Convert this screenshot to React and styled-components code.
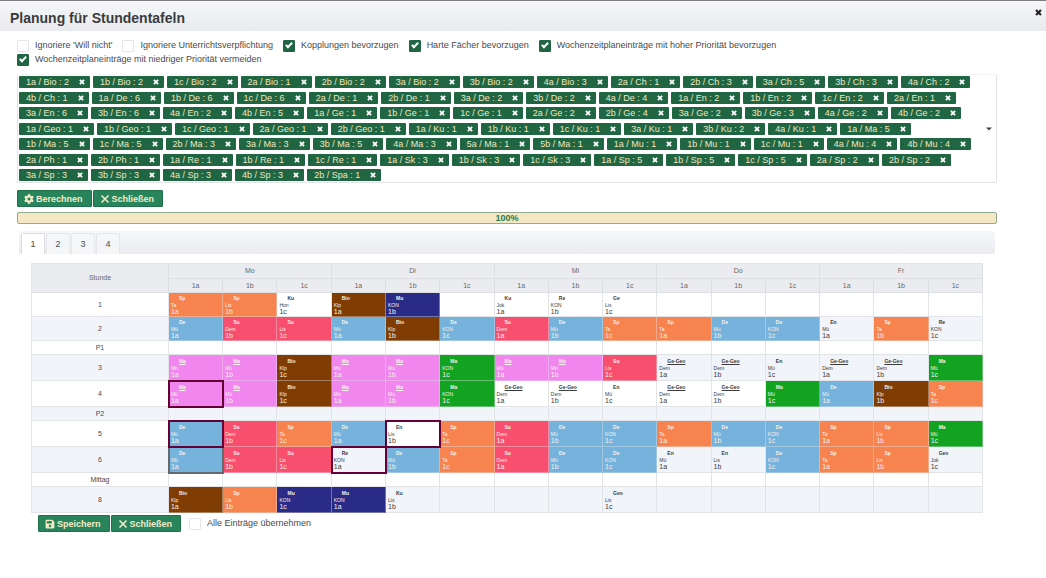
import React, { useState } from "react";
import styled, { createGlobalStyle, css } from "styled-components";
import { FaCog, FaSave } from "react-icons/fa";

const color = {
  text: "#4a4a4c",
  green: "#216642",
  button: "#28845a",
  buttonEdge: "#1f7049",
  cream: "#f3e7c4",
  line: "#e3e4e8",
  stripe: "#f1f4f9",
  head: "#ebecf0",
  change: "#650036",
  swap: "#66696e",
};

const subjectColor = {
  Sp: "#f7834f",
  De: "#75b3dd",
  Su: "#f84f6e",
  Bio: "#803d03",
  Mu: "#292b87",
  MaJoint: "#f186ee",
  Ma: "#12a321",
};

const GlobalStyle = createGlobalStyle`
  *, *::before, *::after { box-sizing: border-box; }
  body {
    margin: 0;
    background: #fff;
    color: ${color.text};
    font-family: "Liberation Sans", Arial, sans-serif;
    font-size: 9px;
    line-height: 12px;
  }
  button, input { font: inherit; color: inherit; margin: 0; }
  button { cursor: pointer; }
`;

const Dialog = styled.main`
  border-top: 1px solid #807e82;
`;

const TitleBar = styled.header`
  display: flex;
  justify-content: space-between;
  align-items: flex-start;
  height: 30px;
  padding: 8px 4px 0 10px;
  background: linear-gradient(#f6f7f9, #e9eaee);
`;

const Title = styled.h1`
  margin: 0;
  font-size: 14px;
  line-height: 18px;
  color: #3b3b3d;
`;

const IconButton = styled.button`
  display: flex;
  padding: 0;
  border: 0;
  background: none;
  color: ${(p) => p.$tone};
`;

const Content = styled.div`
  padding: 8px 49px 0 17px;
`;

const Options = styled.div`
  display: flex;
  flex-wrap: wrap;
  column-gap: 10px;
  row-gap: 1px;
`;

const OptionLabel = styled.label`
  display: flex;
  align-items: flex-start;
  gap: 6px;
  line-height: 12px;
`;

const Tick = styled.input`
  appearance: none;
  display: flex;
  justify-content: center;
  width: 12px;
  height: 12px;
  margin-top: 1px;
  border: 1px solid #e6e6e8;
  border-radius: 1px;
  background: #fff;

  &:checked {
    border-color: ${color.green};
    background: ${color.green};
  }

  &:checked::after {
    content: "";
    width: 4px;
    height: 7px;
    border: solid #fff;
    border-width: 0 2px 2px 0;
    transform: rotate(45deg);
  }
`;

const ChipField = styled.div`
  display: flex;
  align-items: center;
  margin-top: 8px;
  padding: 0 4px 0 1px;
  border: 1px solid ${color.line};
  border-top-color: #f4f4f6;
  border-radius: 2px;
`;

const ChipList = styled.ul`
  flex: 1;
  display: flex;
  flex-wrap: wrap;
  column-gap: 3px;
  row-gap: 3px;
  align-content: space-between;
  min-height: 107px;
  margin: 0;
  padding: 1px 9px 1px 0;
  list-style: none;
`;

const ChipItem = styled.li`
  display: flex;
  align-items: center;
  gap: 10px;
  height: 12px;
  padding: 0 5px 0 7px;
  border-radius: 1px;
  background: ${color.green};
  color: #f0e6c0;
  line-height: 12px;
  white-space: nowrap;
`;

const ButtonRow = styled.div`
  display: flex;
  align-items: center;
  gap: 1px;
  padding: ${(p) => p.$pad || "0"};
`;

const ActionButton = styled.button`
  display: flex;
  align-items: center;
  gap: 2px;
  height: 17px;
  padding: 0 8px 0 6px;
  border: 1px solid ${color.buttonEdge};
  border-radius: 1px;
  background: ${color.button};
  color: #f5ebc8;
  font-weight: bold;
`;

const Progress = styled.div`
  margin-top: 5px;
  height: 12px;
  border: 1px solid #93ab8f;
  border-radius: 2px;
  background: ${color.cream};
  color: #2c7a4b;
  font-weight: bold;
  line-height: 10px;
  text-align: center;
`;

const TabBar = styled.div`
  display: flex;
  align-items: flex-end;
  gap: 1px;
  height: 23px;
  margin: 7px 2px 0;
  padding: 0 2px;
  border-radius: 2px;
  background: linear-gradient(#f6f7f9, #ebecf0);
`;

const Tab = styled.button`
  width: 24px;
  height: 21px;
  padding: 0;
  border: 1px solid ${(p) => (p.$active ? "#dcdde1" : "#e6e7eb")};
  border-bottom: 0;
  border-radius: 2px 2px 0 0;
  background: ${(p) => (p.$active ? "#fff" : "#f5f6f8")};
`;

const TabPanel = styled.section`
  padding: 9px 14px 0;
`;

const Timetable = styled.table`
  width: 100%;
  table-layout: fixed;
  border-collapse: separate;
  border-spacing: 0;
  border: solid ${color.line};
  border-width: 1px 0 0 1px;
  font-size: 7px;
  line-height: 8px;
`;

const HourCol = styled.col`
  width: 14.4%;
`;

const HeadCell = styled.th`
  height: ${(p) => p.$height || 15}px;
  padding: 0;
  border: solid #dedfe3;
  border-width: 0 1px 1px 0;
  background: ${color.head};
  color: #68686c;
  font-weight: normal;
`;

const Row = styled.tr`
  background: ${(p) => (p.$striped ? color.stripe : "#fff")};
`;

const HourCell = styled.th`
  height: ${(p) => p.$height}px;
  padding: 0;
  border: solid ${color.line};
  border-width: 0 1px 1px 0;
  font-weight: normal;
`;

const frame = css`
  position: relative;
  z-index: ${(p) => (p.$frame === "change" ? 2 : 1)};
  outline: 2px solid ${(p) => color[p.$frame]};
  outline-offset: -1px;
`;

const LessonCell = styled.td`
  padding: 0 0 0 2px;
  border: solid ${(p) => (p.$fill ? "rgba(228, 228, 232, 0.4)" : color.line)};
  border-width: 0 1px 1px 0;
  background: ${(p) => p.$fill || "transparent"};
  color: ${(p) => (p.$fill ? "#f6f1ea" : "#3c3c3e")};
  ${(p) => p.$frame && frame}
`;

const Subject = styled.div`
  padding-left: 8px;
  font-size: 5px;
  line-height: 8px;
  font-weight: bold;
  text-decoration: ${(p) => (p.$joint ? "underline" : "none")};
`;

const Teacher = styled.div`
  font-size: 5px;
  line-height: 6px;
`;

const ClassName = styled.div`
  font-size: 7px;
  line-height: 8px;
`;

const FooterOption = styled.div`
  padding-left: 7px;
`;

const CrossIcon = ({ size = 6, stroke = 3 }) => (
  <svg width={size} height={size} viewBox="0 0 10 10" aria-hidden="true">
    <path d="M1.5 1.5 8.5 8.5M8.5 1.5 1.5 8.5" stroke="currentColor" strokeWidth={stroke} fill="none" />
  </svg>
);

const CaretIcon = () => (
  <svg width="6" height="4" viewBox="0 0 6 4" aria-hidden="true">
    <path d="M0 0.5H6L3 3.5Z" fill="currentColor" />
  </svg>
);

const options = [
  ["Ignoriere 'Will nicht'", false],
  ["Ignoriere Unterrichtsverpflichtung", false],
  ["Kopplungen bevorzugen", true],
  ["Harte Fächer bevorzugen", true],
  ["Wochenzeitplaneinträge mit hoher Priorität bevorzugen", true],
  ["Wochenzeitplaneinträge mit niedriger Priorität vermeiden", true],
];

const demand = [
  ["Bio", "1a2 1b2 1c2 2a1 2b2 3a2 3b2 4a3"],
  ["Ch", "2a1 2b3 3a5 3b3 4a2 4b1"],
  ["De", "1a6 1b6 1c6 2a1 2b1 3a2 3b2 4a4"],
  ["En", "1a2 1b2 1c2 2a1 3a6 3b6 4a2 4b5"],
  ["Ge", "1a1 1b1 1c1 2a2 2b4 3a2 3b3 4a2 4b2"],
  ["Geo", "1a1 1b1 1c1 2a1 2b1"],
  ["Ku", "1a1 1b1 1c1 3a1 3b2 4a1"],
  ["Ma", "1a5 1b5 1c5 2b3 3a3 3b5 4a3 5a1 5b1"],
  ["Mu", "1a1 1b1 1c1 4a4 4b4"],
  ["Ph", "2a1 2b1"],
  ["Re", "1a1 1b1 1c1"],
  ["Sk", "1a3 1b3 1c3"],
  ["Sp", "1a5 1b5 1c5 2a2 2b2 3a3 3b3 4a3 4b3"],
  ["Spa", "2b1"],
];

const chips = demand.flatMap(([subject, list]) =>
  list.split(" ").map((entry) => `${entry.slice(0, 2)} / ${subject} : ${entry.slice(2)}`)
);

const days = ["Mo", "Di", "Mi", "Do", "Fr"];
const classes = ["1a", "1b", "1c"];

// Each lesson is "subject teacher"; "_" marks a joint lesson, "!" a changed and "~" a swapped one.
const hours = [
  ["1", 24, "Sp Ta|Sp Lis|Ku Hon|Bio Klp|Mu KON||Ku Jok|Re KON|Ge Lis||||||"],
  ["2", 24, "De Mü|Su Dem|Su Lis|De Mü|Bio Klp|De KON|Su Dem|De Mü|Sp Ta|Sp Ta|De Mü|De KON|En Mü|Sp Ta|Re KON"],
  ["P1", 14, "||||||||||||||"],
  ["3", 26, "_Ma Mü|_Ma Mü|Bio Klp|_Ma Mü|_Ma Mü|Ma KON|_Ma Mü|_Ma Mü|Su Lis|_Ge-Geo Dem|_Ge-Geo Dem|En Mü|_Ge-Geo Dem|_Ge-Geo Dem|Ma Mü"],
  ["4", 26, "!_Ma Mü|_Ma Mü|Bio Klp|_Ma Mü|_Ma Mü|Ma KON|_Ge-Geo Dem|_Ge-Geo Dem|En Mü|_Ge-Geo Dem|_Ge-Geo Dem|Ma Mü|De Mü|Bio Klp|Sp Ta"],
  ["P2", 14, "||||||||||||||"],
  ["5", 26, "!De Mü|Su Dem|Sp Ta|De Mü|!En Lis|Sp Ta|Su Dem|De Mü|De KON|Sp Ta|De Mü|De KON|Sp Ta|Sp Lis|Ma Mü"],
  ["6", 26, "~De Mü|Su Dem|Su Lis|!Re KON|De Mü|Sp Ta|Su Dem|De Mü|De KON|En Mü|En Lis|De KON|Sp Ta|Sp Lis|Geo Jok"],
  ["Mittag", 14, "||||||||||||||"],
  ["8", 26, "Bio Klp|Sp Lis|Mu KON|Mu KON|Ku Lis||||Geo Lis||||||"],
];

function Option({ label, checked = false }) {
  return (
    <OptionLabel>
      <Tick type="checkbox" defaultChecked={checked} />
      {label}
    </OptionLabel>
  );
}

function Chip({ label }) {
  return (
    <ChipItem>
      {label}
      <IconButton type="button" $tone="#fff" aria-label={`${label} entfernen`}>
        <CrossIcon />
      </IconButton>
    </ChipItem>
  );
}

function Lesson({ entry, className }) {
  if (!entry) return <LessonCell />;
  const frameKind = entry[0] === "!" ? "change" : entry[0] === "~" ? "swap" : undefined;
  const joint = entry.includes("_");
  const [subject, teacher] = entry.replace(/[!~_]/g, "").split(" ");
  const fill = joint ? subjectColor[`${subject}Joint`] : subjectColor[subject];
  return (
    <LessonCell $fill={fill} $frame={frameKind}>
      <Subject $joint={joint}>{subject}</Subject>
      <Teacher>{teacher}</Teacher>
      <ClassName>{className}</ClassName>
    </LessonCell>
  );
}

function Plan() {
  return (
    <Timetable>
      <colgroup>
        <HourCol />
        {days.flatMap((d) => classes.map((c) => <col key={d + c} />))}
      </colgroup>
      <thead>
        <tr>
          <HeadCell rowSpan={2} scope="col">Stunde</HeadCell>
          {days.map((d) => (
            <HeadCell key={d} colSpan={3} scope="colgroup">{d}</HeadCell>
          ))}
        </tr>
        <tr>
          {days.flatMap((d) => classes.map((c) => <HeadCell key={d + c} $height={14} scope="col">{c}</HeadCell>))}
        </tr>
      </thead>
      <tbody>
        {hours.map(([name, height, lessons], i) => (
          <Row key={name} $striped={i % 2 === 1}>
            <HourCell scope="row" $height={height}>{name}</HourCell>
            {lessons.split("|").map((entry, k) => (
              <Lesson key={k} entry={entry} className={classes[k % 3]} />
            ))}
          </Row>
        ))}
      </tbody>
    </Timetable>
  );
}

export default function App() {
  const [tab, setTab] = useState(1);
  return (
    <Dialog>
      <GlobalStyle />
      <TitleBar>
        <Title>Planung für Stundentafeln</Title>
        <IconButton type="button" $tone="#222" aria-label="Dialog schließen">
          <CrossIcon size={7} />
        </IconButton>
      </TitleBar>
      <Content>
        <Options>
          {options.map(([label, checked]) => (
            <Option key={label} label={label} checked={checked} />
          ))}
        </Options>
        <ChipField>
          <ChipList>
            {chips.map((label) => (
              <Chip key={label} label={label} />
            ))}
          </ChipList>
          <IconButton type="button" $tone="#444" aria-label="Auswahl öffnen">
            <CaretIcon />
          </IconButton>
        </ChipField>
        <ButtonRow $pad="7px 0 0">
          <ActionButton type="button">
            <FaCog size={10} />
            Berechnen
          </ActionButton>
          <ActionButton type="button">
            <CrossIcon size={10} stroke={1.6} />
            Schließen
          </ActionButton>
        </ButtonRow>
        <Progress role="progressbar" aria-valuenow={100} aria-valuemin={0} aria-valuemax={100}>
          100%
        </Progress>
        <TabBar role="tablist">
          {[1, 2, 3, 4].map((n) => (
            <Tab key={n} type="button" role="tab" aria-selected={tab === n} $active={tab === n} onClick={() => setTab(n)}>
              {n}
            </Tab>
          ))}
        </TabBar>
        <TabPanel role="tabpanel">
          <Plan />
          <ButtonRow $pad="2px 7px">
            <ActionButton type="button">
              <FaSave size={10} />
              Speichern
            </ActionButton>
            <ActionButton type="button">
              <CrossIcon size={10} stroke={1.6} />
              Schließen
            </ActionButton>
            <FooterOption>
              <Option label="Alle Einträge übernehmen" />
            </FooterOption>
          </ButtonRow>
        </TabPanel>
      </Content>
    </Dialog>
  );
}
